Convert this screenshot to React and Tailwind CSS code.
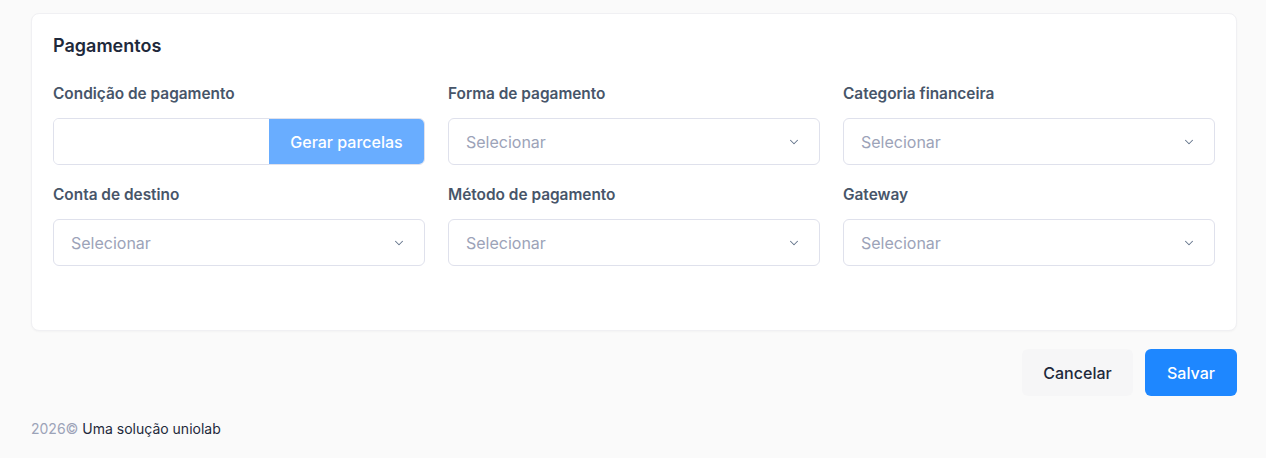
import { ChevronDown } from "lucide-react"

function Field({ label, children }) {
  return (
    <div className="flex flex-col">
      <label className="text-[15.4px] font-semibold text-[#475569] leading-[22px] mb-[13px]">{label}</label>
      {children}
    </div>
  )
}

function Select() {
  return (
    <div className="h-[47px] rounded-md border border-[#dfe1ec] bg-white flex items-center justify-between pl-[17px] pr-[18px]">
      <span className="text-[16px] text-[#9ca3b8]">Selecionar</span>
      <ChevronDown size={14} strokeWidth={1.8} className="text-[#64748b]" />
    </div>
  )
}

export default function App() {
  return (
    <div className="min-h-[458px] bg-[#fafafa] pl-[31px] pr-[29px] pt-[13px]" style={{ fontFamily: "Inter, 'Liberation Sans', sans-serif" }}>
      <div className="bg-white border border-[#f0f0f3] rounded-lg shadow-[0_1px_2px_rgba(0,0,0,0.03)] px-[21px] pt-[18px] pb-[64px]">
        <h3 className="text-[18px] font-semibold text-[#1e293b] leading-7 mb-[23px]">Pagamentos</h3>
        <div className="grid grid-cols-3 gap-x-[23px] gap-y-[19px]">
          <Field label="Condição de pagamento">
            <div className="h-[47px] flex rounded-md border border-[#dfe1ec] overflow-hidden">
              <input className="flex-1 min-w-0 outline-none bg-white px-4" />
              <button className="w-[155px] bg-[#69adff] text-white text-[16px] font-medium">Gerar parcelas</button>
            </div>
          </Field>
          <Field label="Forma de pagamento"><Select /></Field>
          <Field label="Categoria financeira"><Select /></Field>
          <Field label="Conta de destino"><Select /></Field>
          <Field label="Método de pagamento"><Select /></Field>
          <Field label="Gateway"><Select /></Field>
        </div>
      </div>
      <div className="flex justify-end gap-3 mt-[18px]">
        <button className="h-[47px] w-[111px] rounded-md bg-[#f6f6f7] text-[#1e293b] text-[16px] font-medium">Cancelar</button>
        <button className="h-[47px] w-[92px] rounded-md bg-[#1e87ff] text-white text-[16px] font-medium">Salvar</button>
      </div>
      <p className="mt-[23px] text-[14px] leading-5"><span className="text-[#9ca3b8]">2026©</span> <span className="text-[#1e293b]">Uma solução uniolab</span></p>
    </div>
  )
}
